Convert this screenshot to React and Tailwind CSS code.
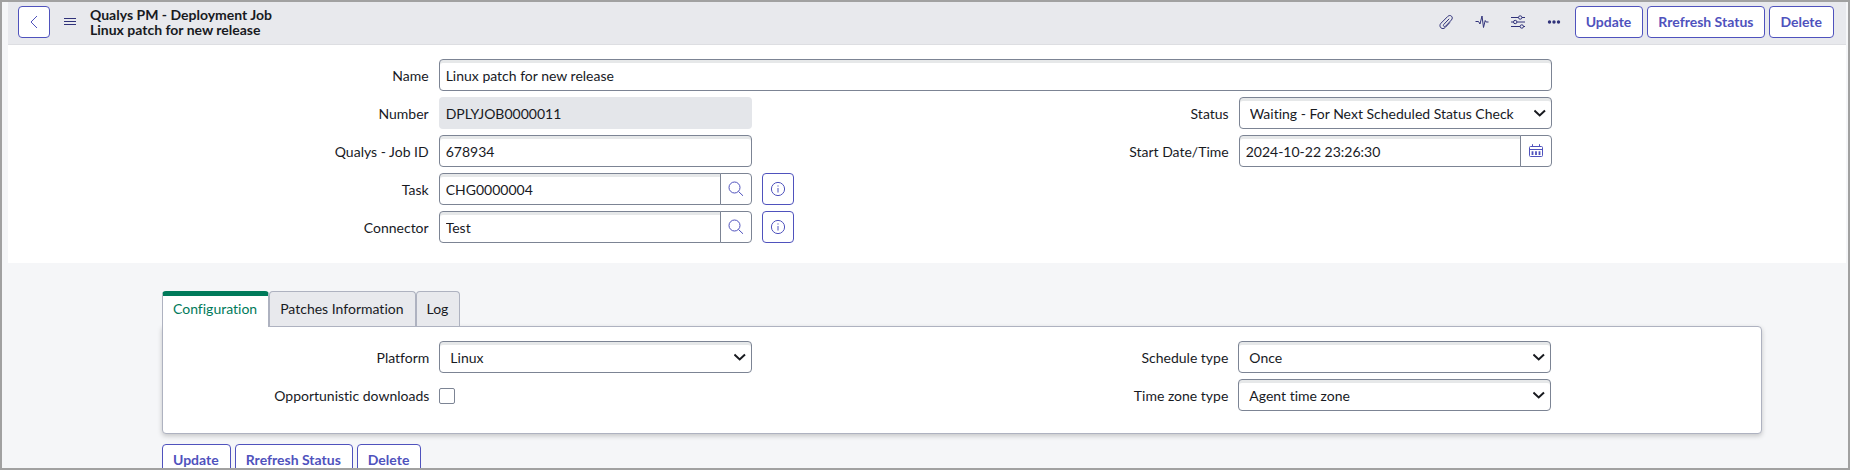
import { useState } from 'react';

const fieldBase = 'h-8 w-full min-w-0 border border-[#7c8494] pt-px text-[#181a1f]';
const insetShade = 'shadow-[inset_0_3px_0_#e6e8e9]';

const actions = ['Update', 'Rrefresh Status', 'Delete'];

const tabs = ['Configuration', 'Patches Information', 'Log'];

function ActionButtons() {
    return (
        <div className="flex gap-1">
            {actions.map((label) => (
                <button
                    key={label}
                    type="button"
                    className="h-8 rounded border border-[#4f52bd] bg-white pr-[11px] pl-[10px] font-bold whitespace-nowrap text-[#4f52bd]"
                >
                    {label}
                </button>
            ))}
        </div>
    );
}

function Row({ id, label, side, children }) {
    return (
        <div className="grid grid-cols-12 items-center">
            <label htmlFor={id} className="col-span-4 pt-px text-right">{label}</label>
            <div className="col-span-5 flex h-8 items-center px-[10px]">{children}</div>
            <div className="col-span-3">{side}</div>
        </div>
    );
}

function TextInput({ id, value }) {
    return <input id={id} type="text" defaultValue={value} className={`${fieldBase} ${insetShade} rounded bg-white px-[6px]`} />;
}

function SelectInput({ id, options }) {
    return (
        <div className="relative w-full">
            <select id={id} className={`${fieldBase} ${insetShade} appearance-none rounded bg-white pr-7 pl-[10px]`}>
                {options.map((o) => (
                    <option key={o}>{o}</option>
                ))}
            </select>
            <svg
                className="pointer-events-none absolute top-1/2 right-[6px] h-2 w-3 -translate-y-1/2"
                viewBox="0 0 12 8"
                fill="none"
                stroke="#181a1f"
                strokeWidth="2"
            >
                <path d="M.4 1.500 5.700 6.500l5.300-5" />
            </svg>
        </div>
    );
}

function AddonInput({ id, value, buttonLabel, icon }) {
    return (
        <div className="flex w-full">
            <input id={id} type="text" defaultValue={value} className={`${fieldBase} ${insetShade} rounded-l bg-white px-[6px]`} />
            <button
                type="button"
                aria-label={buttonLabel}
                className="-ml-px flex h-8 w-8 shrink-0 items-center justify-center rounded-r border border-[#7c8494] bg-white text-[#4f52bd]"
            >
                {icon}
            </button>
        </div>
    );
}

function InfoButton({ label }) {
    return (
        <button
            type="button"
            aria-label={label}
            className="flex h-8 w-8 items-center justify-center rounded border border-[#4f52bd] bg-white text-[#4f52bd]"
        >
            <svg className="h-4 w-4" viewBox="0 0 16 16" fill="none" stroke="currentColor">
                <circle cx="8" cy="8" r="6.6" />
                <path d="M8 7v4.5M8 4.4v1.2" />
            </svg>
        </button>
    );
}

const searchIcon = (
    <svg className="h-4 w-4" viewBox="0 0 16 16" fill="none" stroke="currentColor">
        <circle cx="6.5" cy="6.5" r="5.5" />
        <path d="m10.5 10.5 4.500 4.300" />
    </svg>
);

const calendarIcon = (
    <svg className="h-4 w-4" viewBox="0 0 16 16" fill="none" stroke="currentColor">
        <rect x="1.5" y="3.5" width="13" height="10" rx="1" />
        <path d="M1.5 6.5h13M4.5 1.200v2.300M11.5 1.200v2.300" />
        <path d="M4.500 8.200v3.800M8 8.200v3.800M11.500 8.200v3.800" strokeWidth="1.800" />
    </svg>
);

const toolbar = [
    {
        label: 'Attachments',
        icon: (
            <path d="M11.200 4.800 5.800 10.400c-.7.8-.4 1.500 0 1.900.5.4 1.200.4 1.900-.2l5.700-6.100c1.300-1.400 1-2.900.1-3.800-.9-.9-2.500-1-3.700.2L3 9.200c-1.600 1.700-1.200 3.500-.1 4.600 1.100 1 2.900 1.200 4.300-.3l4.700-5" />
        ),
    },
    {
        label: 'Activity',
        icon: <path d="M1.500 7.500h3l1.500 2.500 2-8 1.500 11.500 1.700-7 .9 1.500h2.400" />,
    },
    {
        label: 'Personalize form',
        icon: (
            <>
                <path d="M1 3.500h7.500M12 3.500h3M1 8h2.500M7 8h8M1 12.500h9M13.500 12.500h1.500" />
                <circle cx="10.200" cy="3.500" r="1.700" />
                <circle cx="5.200" cy="8" r="1.700" />
                <circle cx="11.800" cy="12.500" r="1.700" />
            </>
        ),
    },
    {
        label: 'More options',
        icon: (
            <g fill="currentColor" stroke="none">
                <circle cx="3.500" cy="8" r="1.700" />
                <circle cx="8" cy="8" r="1.700" />
                <circle cx="12.500" cy="8" r="1.700" />
            </g>
        ),
    },
];

export default function App() {
    const [activeTab, setActiveTab] = useState('Configuration');

    return (
        <div className="h-screen overflow-hidden border-2 border-[#a1a1a1] bg-[#f5f6f8] pr-[2px] pl-[6px] font-['Lato',sans-serif] text-sm text-[#181a1f] [font-variant-ligatures:none]">
            <header className="flex h-[43px] items-start border-b border-[#dddee2] bg-[#e8e9ed] pt-1 pr-3 pl-[10px]">
                <button
                    type="button"
                    aria-label="Back"
                    className="flex h-8 w-8 items-center justify-center rounded border border-[#4f52bd] bg-white text-[#4f52bd]"
                >
                    <svg className="h-4 w-4" viewBox="0 0 16 16" fill="none" stroke="currentColor">
                        <path d="M11 2 5 8l6 6" />
                    </svg>
                </button>
                <button type="button" aria-label="Menu" className="ml-3 flex h-8 w-4 items-center justify-center text-[#30327a]">
                    <svg className="h-4 w-3" viewBox="0 0 12 16" fill="none" stroke="currentColor">
                        <path d="M0 4.500h12M0 7.500h12M0 10.500h12" />
                    </svg>
                </button>
                <h1 className="ml-3 pt-px leading-[15px] font-bold">
                    <span className="block">Qualys PM - Deployment Job</span>
                    <span className="block">Linux patch for new release</span>
                </h1>
                <div className="ml-auto flex items-center">
                    {toolbar.map(({ label, icon }) => (
                        <button
                            key={label}
                            type="button"
                            aria-label={label}
                            className="flex h-8 w-9 items-center justify-center text-[#30327a]"
                        >
                            <svg className="h-4 w-4" viewBox="0 0 16 16" fill="none" stroke="currentColor">
                                {icon}
                            </svg>
                        </button>
                    ))}
                    <div className="ml-[3px]">
                        <ActionButtons />
                    </div>
                </div>
            </header>

            <main>
                <section className="bg-white pt-[14px] pr-[84px] pb-5 pl-[154px]">
                    <div className="grid grid-cols-24 items-center">
                        <label htmlFor="name" className="col-span-4 pt-px text-right">Name</label>
                        <div className="col-span-17 px-[10px]">
                            <TextInput id="name" value="Linux patch for new release" />
                        </div>
                    </div>
                    <div className="mt-[6px] grid grid-cols-2">
                        <div className="flex flex-col gap-[6px]">
                            <Row id="number" label="Number">
                                <input
                                    id="number"
                                    type="text"
                                    readOnly
                                    value="DPLYJOB0000011"
                                    className="h-8 w-full min-w-0 rounded bg-[#e4e6ea] px-[7px] pt-px"
                                />
                            </Row>
                            <Row id="job-id" label="Qualys - Job ID">
                                <TextInput id="job-id" value="678934" />
                            </Row>
                            <Row id="task" label="Task" side={<InfoButton label="Preview task" />}>
                                <AddonInput id="task" value="CHG0000004" buttonLabel="Look up task" icon={searchIcon} />
                            </Row>
                            <Row id="connector" label="Connector" side={<InfoButton label="Preview connector" />}>
                                <AddonInput id="connector" value="Test" buttonLabel="Look up connector" icon={searchIcon} />
                            </Row>
                        </div>
                        <div className="flex flex-col gap-[6px]">
                            <Row id="status" label="Status">
                                <SelectInput id="status" options={['Waiting - For Next Scheduled Status Check']} />
                            </Row>
                            <Row id="start" label="Start Date/Time">
                                <AddonInput id="start" value="2024-10-22 23:26:30" buttonLabel="Pick date" icon={calendarIcon} />
                            </Row>
                        </div>
                    </div>
                </section>

                <section className="pt-7 pr-[84px] pl-[154px]">
                    <div role="tablist" className="flex">
                        {tabs.map((tab) => (
                            <button
                                key={tab}
                                type="button"
                                role="tab"
                                aria-selected={tab === activeTab}
                                onClick={() => setActiveTab(tab)}
                                className={
                                    tab === activeTab
                                        ? 'relative z-10 -mb-px h-9 rounded-t border-x border-t-[5px] border-x-[#aeb2c0] border-t-[#007a5a] bg-white pr-[11px] pb-[6px] pl-[10px] text-[#007a5a]'
                                        : 'h-[35px] rounded-t border border-b-0 border-[#aeb2c0] bg-[#e8e9ed] pr-[11px] pl-[10px]'
                                }
                            >
                                {tab}
                            </button>
                        ))}
                    </div>
                    <div
                        role="tabpanel"
                        className="grid grid-cols-2 rounded rounded-tl-none border border-[#aeb2c0] bg-white pt-[14px] pb-[22px] shadow-[0_2px_5px_rgba(0,0,0,0.2)]"
                    >
                        <div className="flex flex-col gap-[6px]">
                            <Row id="platform" label="Platform">
                                <SelectInput id="platform" options={['Linux', 'Windows', 'Mac']} />
                            </Row>
                            <Row id="opportunistic" label="Opportunistic downloads">
                                <input
                                    id="opportunistic"
                                    type="checkbox"
                                    className="mt-[2px] h-4 w-4 appearance-none rounded-xs border border-[#7c8494] bg-white checked:bg-[#4f52bd]"
                                />
                            </Row>
                        </div>
                        <div className="flex flex-col gap-[6px]">
                            <Row id="schedule" label="Schedule type">
                                <SelectInput id="schedule" options={['Once', 'Recurring']} />
                            </Row>
                            <Row id="timezone" label="Time zone type">
                                <SelectInput id="timezone" options={['Agent time zone', 'Specific time zone']} />
                            </Row>
                        </div>
                    </div>
                    <div className="mt-[10px]">
                        <ActionButtons />
                    </div>
                </section>
            </main>
        </div>
    );
}
